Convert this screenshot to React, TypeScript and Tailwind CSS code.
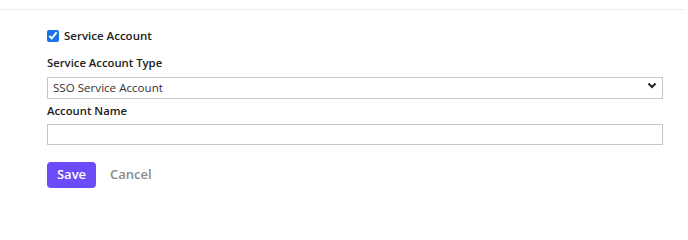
import { useState } from "react";

const FONT = { fontFamily: '"Open Sans", "Liberation Sans", sans-serif' };

export default function App() {
  const [isService, setIsService] = useState(true);
  const [accountType, setAccountType] = useState("sso");
  const [accountName, setAccountName] = useState("");

  return (
    <main className="h-[224px] w-[688px] bg-white text-[#222]" style={FONT}>
      <div className="h-[10px] w-[685px] border-b border-[#eeeeee]" />

      <form className="flex flex-col px-[47px] pt-[19px]" onSubmit={(e) => e.preventDefault()}>
        <label className="flex h-[13px] items-center gap-[5px] text-[11.5px] font-semibold leading-none">
          <input
            type="checkbox"
            checked={isService}
            onChange={(e) => setIsService(e.target.checked)}
            className="h-[12px] w-[12px] accent-[#1a73e8]"
          />
          Service Account
        </label>

        <label className="mt-[14px] text-[11.3px] font-semibold leading-[14px]">Service Account Type</label>
        <div className="relative mt-[4px] h-[22px] w-[616px]">
          <select
            value={accountType}
            onChange={(e) => setAccountType(e.target.value)}
            className="h-full w-full appearance-none rounded-none border border-[#c6c6c6] bg-white pl-[5px] text-[11.6px] text-[#333]"
          >
            <option value="sso">SSO Service Account</option>
            <option value="local">Local Service Account</option>
          </select>
          <svg
            className="pointer-events-none absolute right-[6px] top-[8px]"
            width="10"
            height="7"
            viewBox="0 0 10 7"
          >
            <path d="M1.5 1.5 L5 5 L8.5 1.5" fill="none" stroke="#222" strokeWidth="2" />
          </svg>
        </div>

        <label className="mt-[8px] text-[11.3px] font-semibold leading-[14px]">Account Name</label>
        <input
          type="text"
          value={accountName}
          onChange={(e) => setAccountName(e.target.value)}
          className="mt-[6px] h-[21px] w-[616px] border border-[#c6c6c6] px-[5px] text-[11.6px]"
        />

        <div className="mt-[17px] flex items-center gap-[14px]">
          <button
            type="submit"
            className="h-[26px] w-[49px] rounded-[4px] bg-[#6c4cf8] text-[13px] font-semibold text-white"
          >
            Save
          </button>
          <button type="button" className="text-[13px] font-semibold text-[#8a8a8a]">
            Cancel
          </button>
        </div>
      </form>
    </main>
  );
}
